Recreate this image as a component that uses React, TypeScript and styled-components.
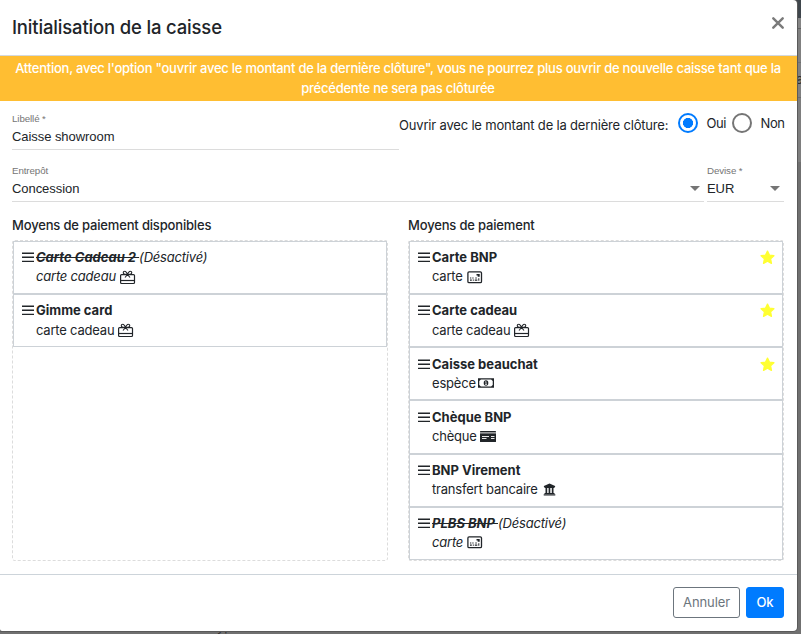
import React from "react";
import styled, { createGlobalStyle } from "styled-components";

const Global = createGlobalStyle`
  * { box-sizing: border-box; }
  body {
    margin: 0;
    overflow: hidden;
    background: #757575;
    color: #212529;
    font: 13px/19.5px Inter, sans-serif;
  }
`;

const Page = styled.div`
  position: relative;
  width: 801px;
  height: 634px;
  overflow: hidden;
  background: linear-gradient(#3f464c 0 18px, #858585 18px 28px, #626262 28px 29px, #808080 29px 62px, #707070 62px 63px, #808080 63px 97px, #6c6c6c 97px 98px, #7e7e7e 98px 162px, #707070 162px);
`;

const BackdropText = styled.span<{ $x: number; $y: number }>`
  position: absolute;
  left: ${(p) => p.$x}px;
  top: ${(p) => p.$y}px;
  color: #303030;
`;

const Modal = styled.div`
  position: relative;
  display: flex;
  flex-direction: column;
  width: 797px;
  height: 631px;
  background: #fff;
  border-radius: 0 4px 4px 2px;
  box-shadow: 0 0 0 1px #5a5a5a;
  overflow: hidden;
`;

const Header = styled.header`
  display: flex;
  justify-content: space-between;
  height: 56px;
  padding: 13px 13px 0 12px;
  border-bottom: 1px solid #d3d9de;
`;

const Title = styled.h1`
  margin: 0;
  font-size: 18.5px;
  line-height: 28px;
  font-weight: 500;
  letter-spacing: -0.17px;
`;

const CloseIcon = styled.svg`
  width: 12px;
  height: 12px;
  margin-top: 4px;
`;

const Warning = styled.div`
  height: 45px;
  padding: 3px 13px 3px 12px;
  background: #ffbe32;
  color: #fff;
  text-align: center;
  font-weight: 500;
  white-space: pre-line;
  letter-spacing: -0.235px;
`;

const Row = styled.div<{ $gap?: number; $top: number }>`
  display: flex;
  gap: ${(p) => p.$gap ?? 0}px;
  margin-top: ${(p) => p.$top}px;
  padding: 0 13px 0 12px;
`;

const Field = styled.div<{ $width: number }>`
  flex: none;
  width: ${(p) => p.$width}px;
  height: 40px;
  border-bottom: 1px solid #dcdcdc;
  font-family: "Liberation Sans", sans-serif;
`;

const FieldLabel = styled.div`
  height: 15px;
  padding-top: 2px;
  color: #757575;
  font-size: 9.75px;
  line-height: 14px;
  letter-spacing: -0.1px;
`;

const FieldValue = styled.div`
  display: flex;
  justify-content: space-between;
  align-items: center;
  height: 23px;
  padding-right: 4px;
  line-height: 23px;
  letter-spacing: -0.06px;
`;

const Arrow = styled.i`
  border: 5px solid transparent;
  border-top-color: #757575;
  border-bottom: 0;
`;

const Radios = styled.div`
  display: flex;
  align-items: center;
  width: 385px;
  height: 26px;
`;

const Question = styled.span`
  flex: none;
  width: 279px;
  padding-top: 5px;
  white-space: nowrap;
  letter-spacing: -0.18px;
`;

const RadioDot = styled.span<{ $on?: boolean }>`
  flex: none;
  width: 20px;
  height: 20px;
  border: 2px solid ${(p) => (p.$on ? "#007bff" : "#757575")};
  border-radius: 50%;
  background: ${(p) => (p.$on ? "radial-gradient(circle, #007bff 4.8px, #fff 5.3px)" : "#fff")};
`;

const RadioText = styled.span<{ $width: number }>`
  flex: none;
  width: ${(p) => p.$width}px;
  padding: 1px 0 0 8.5px;
  white-space: nowrap;
  letter-spacing: -0.4px;
`;

const Column = styled.section`
  width: 376px;
`;

const ColumnTitle = styled.h2`
  margin: 0 0 5px;
  font-size: 13px;
  line-height: 20px;
  font-weight: 500;
  white-space: nowrap;
  letter-spacing: -0.17px;
`;

const DropZone = styled.div`
  height: 321px;
  border: 1px dashed #dcdcdc;
  border-radius: 3px;
`;

const Item = styled.div<{ $off?: boolean }>`
  display: flex;
  height: 53.17px;
  padding: 6.2px 7px 0 8px;
  border: 1px solid #cdd2d7;
  font-style: ${(p) => (p.$off ? "italic" : "normal")};
`;

const Handle = styled.svg`
  flex: none;
  width: 12px;
  height: 12px;
  margin: 3px 2px 0 0;
`;

const ItemBody = styled.div`
  flex: 1;
  white-space: pre;
  letter-spacing: -0.2px;
`;

const Name = styled.b<{ $off?: boolean }>`
  font-weight: 700;
  letter-spacing: 0;
  text-decoration: ${(p) => (p.$off ? "line-through" : "none")};
`;

const iconGap: Record<IconKind, number> = { gift: 4, card: 4, cash: 2, check: 3, bank: 4 };

const Kind = styled.div<{ $icon: IconKind }>`
  display: flex;
  align-items: center;
  gap: ${(p) => iconGap[p.$icon]}px;
  margin-top: -0.3px;
`;

const Star = styled.svg`
  width: 15px;
  height: 15px;
  margin-top: 2px;
`;

const Footer = styled.footer`
  display: flex;
  justify-content: flex-end;
  gap: 6px;
  margin-top: 13px;
  padding: 12px 13px 0;
  border-top: 1px solid #cdd4da;
`;

const Button = styled.button<{ $primary?: boolean }>`
  width: ${(p) => (p.$primary ? 38 : 67)}px;
  height: 31px;
  padding: 0;
  border: 1px solid ${(p) => (p.$primary ? "#007bff" : "#6c757d")};
  border-radius: 3px;
  background: ${(p) => (p.$primary ? "#007bff" : "#fff")};
  color: ${(p) => (p.$primary ? "#fff" : "#6c757d")};
  font: inherit;
  font-weight: ${(p) => (p.$primary ? 500 : 400)};
  letter-spacing: -0.1px;
`;

type IconKind = "gift" | "card" | "cash" | "check" | "bank";

const KindIcon = ({ kind }: { kind: IconKind }) => {
  switch (kind) {
    case "gift":
      return (
        <svg width="16" height="15" viewBox="0 0 16 15" fill="none" stroke="#212529" strokeWidth="1.1">
          <rect x=".6" y="4.600" width="13.900" height="8.900" rx="1" strokeWidth="1.200" />
          <path d="M.6 10.500h13.900" strokeWidth="1.200" />
          <path d="M7.500 4.500C6.800 2.600 5.700 1 4.500 1.200 3 1.400 2.900 3.300 4 4c.9.600 2.300.5 3.500.5ZM7.500 4.500C8.200 2.600 9.300 1 10.500 1.200 12 1.400 12.100 3.300 11 4c-.9.600-2.300.5-3.500.5ZM7.500 4.500 5 7.500M7.500 4.500 10 7.500" />
        </svg>
      );
    case "card":
      return (
        <svg width="16" height="13" viewBox="0 0 16 13">
          <rect x=".9" y=".9" width="13.600" height="10.800" rx="1.200" fill="none" stroke="#212529" strokeWidth="1.300" />
          <path d="M9.500 3h3.200v2.700h-2V4.500H9.500ZM3 6.500h1.300v1H3Zm2.300 0h1.300v1H5.300Zm3 0h1.500v1H8.300ZM3 8.500h1.800v1.200H3Zm2.800 0h1v1.200h-1Zm2 0h2.500v1.200H7.800Zm3.500-1.200h1v2.400h-1Z" fill="#212529" />
        </svg>
      );
    case "cash":
      return (
        <svg width="16" height="10" viewBox="0 0 16.500 10">
          <path fillRule="evenodd" fill="#212529" d="M0 0h16.500v10H0ZM3 1.400 1.300 3v4L3 8.600h10.500L15.200 7V3l-1.700-1.600Z" />
          <ellipse cx="8.250" cy="5" rx="2.400" ry="2.800" fill="#212529" />
          <path d="M8.300 3.500v3M7.400 4l.9-.4M7.300 6.500h2" stroke="#fff" strokeWidth=".7" />
        </svg>
      );
    case "check":
      return (
        <svg width="16" height="11" viewBox="0 0 16 11">
          <rect width="16" height="11" rx=".6" fill="#212529" />
          <path d="M0 1.900h16" stroke="#fff" strokeWidth=".9" />
          <path d="M2 5.500h7M2 7.500h4.500M11 5.500h3.500M11 7.500h3.500" stroke="#fff" strokeWidth=".9" />
        </svg>
      );
    case "bank":
      return (
        <svg width="15" height="13" viewBox="-1.500 0 15 13" fill="#212529">
          <path d="M6 .5 11.600 3v1H.4V3ZM1 4h10v1H1ZM2 5h1.700v5H2Zm3.100 0h1.700v5H5.100Zm3.200 0H10v5H8.300ZM1 10h10v1H1ZM.2 11.300h11.600v1.200H.2Z" />
        </svg>
      );
  }
};

type Entry = { name: string; kind: string; icon: IconKind; off?: boolean; star?: boolean };

const available: Entry[] = [
  { name: "Carte Cadeau 2", kind: "carte cadeau", icon: "gift", off: true },
  { name: "Gimme card", kind: "carte cadeau", icon: "gift" },
];

const selected: Entry[] = [
  { name: "Carte BNP", kind: "carte", icon: "card", star: true },
  { name: "Carte cadeau", kind: "carte cadeau", icon: "gift", star: true },
  { name: "Caisse beauchat", kind: "espèce", icon: "cash", star: true },
  { name: "Chèque BNP", kind: "chèque", icon: "check" },
  { name: "BNP Virement", kind: "transfert bancaire", icon: "bank" },
  { name: "PLBS BNP", kind: "carte", icon: "card", off: true },
];

const PaymentList = ({ title, entries }: { title: string; entries: Entry[] }) => (
  <Column>
    <ColumnTitle>{title}</ColumnTitle>
    <DropZone>
      {entries.map((e) => (
        <Item key={e.name} $off={e.off}>
          <Handle viewBox="0 0 12 12">
            <path d="M0 2.200h12M0 6.300h12M0 10.400h12" stroke="#212529" strokeWidth="1.400" />
          </Handle>
          <ItemBody>
            <Name $off={e.off}>{e.off ? e.name + " " : e.name}</Name>
            {e.off && "(Désactivé)"}
            <Kind $icon={e.icon}>
              {e.kind}
              <KindIcon kind={e.icon} />
            </Kind>
          </ItemBody>
          {e.star && (
            <Star viewBox="0 0 14 14">
              <path
                d="M7 1 8.800 4.800 13 5.300 9.900 8.200 10.700 12.500 7 10.400 3.300 12.500 4.100 8.200 1 5.300 5.200 4.800Z"
                fill="#ffff32"
                stroke="#ffff32"
                strokeWidth="1.200"
                strokeLinejoin="round"
              />
            </Star>
          )}
        </Item>
      ))}
    </DropZone>
  </Column>
);

export default function App() {
  return (
    <Page>
      <Global />
      <BackdropText $x={796} $y={70}>a</BackdropText>
      <BackdropText $x={217} $y={617}>yp</BackdropText>
      <Modal>
        <Header>
          <Title>Initialisation de la caisse</Title>
          <CloseIcon viewBox="0 0 12 12">
            <path d="m1.300 1.300 9.400 9.400M10.700 1.300l-9.400 9.400" stroke="#7b7b7b" strokeWidth="2.400" strokeLinecap="round" />
          </CloseIcon>
        </Header>
        <Warning>
          {'Attention, avec l\'option "ouvrir avec le montant de la dernière clôture", vous ne pourrez plus ouvrir de nouvelle caisse tant que la\nprécédente ne sera pas clôturée'}
        </Warning>
        <Row $top={9}>
          <Field $width={387}>
            <FieldLabel>Libellé *</FieldLabel>
            <FieldValue>Caisse showroom</FieldValue>
          </Field>
          <Radios>
            <Question>Ouvrir avec le montant de la dernière clôture:</Question>
            <RadioDot $on />
            <RadioText $width={34}>Oui</RadioText>
            <RadioDot />
            <RadioText $width={33}>Non</RadioText>
          </Radios>
        </Row>
        <Row $top={12} $gap={3}>
          <Field $width={692}>
            <FieldLabel>Entrepôt</FieldLabel>
            <FieldValue>Concession<Arrow /></FieldValue>
          </Field>
          <Field $width={77}>
            <FieldLabel>Devise *</FieldLabel>
            <FieldValue>EUR<Arrow /></FieldValue>
          </Field>
        </Row>
        <Row $top={13} $gap={20}>
          <PaymentList title="Moyens de paiement disponibles" entries={available} />
          <PaymentList title="Moyens de paiement" entries={selected} />
        </Row>
        <Footer>
          <Button>Annuler</Button>
          <Button $primary>Ok</Button>
        </Footer>
      </Modal>
    </Page>
  );
}
